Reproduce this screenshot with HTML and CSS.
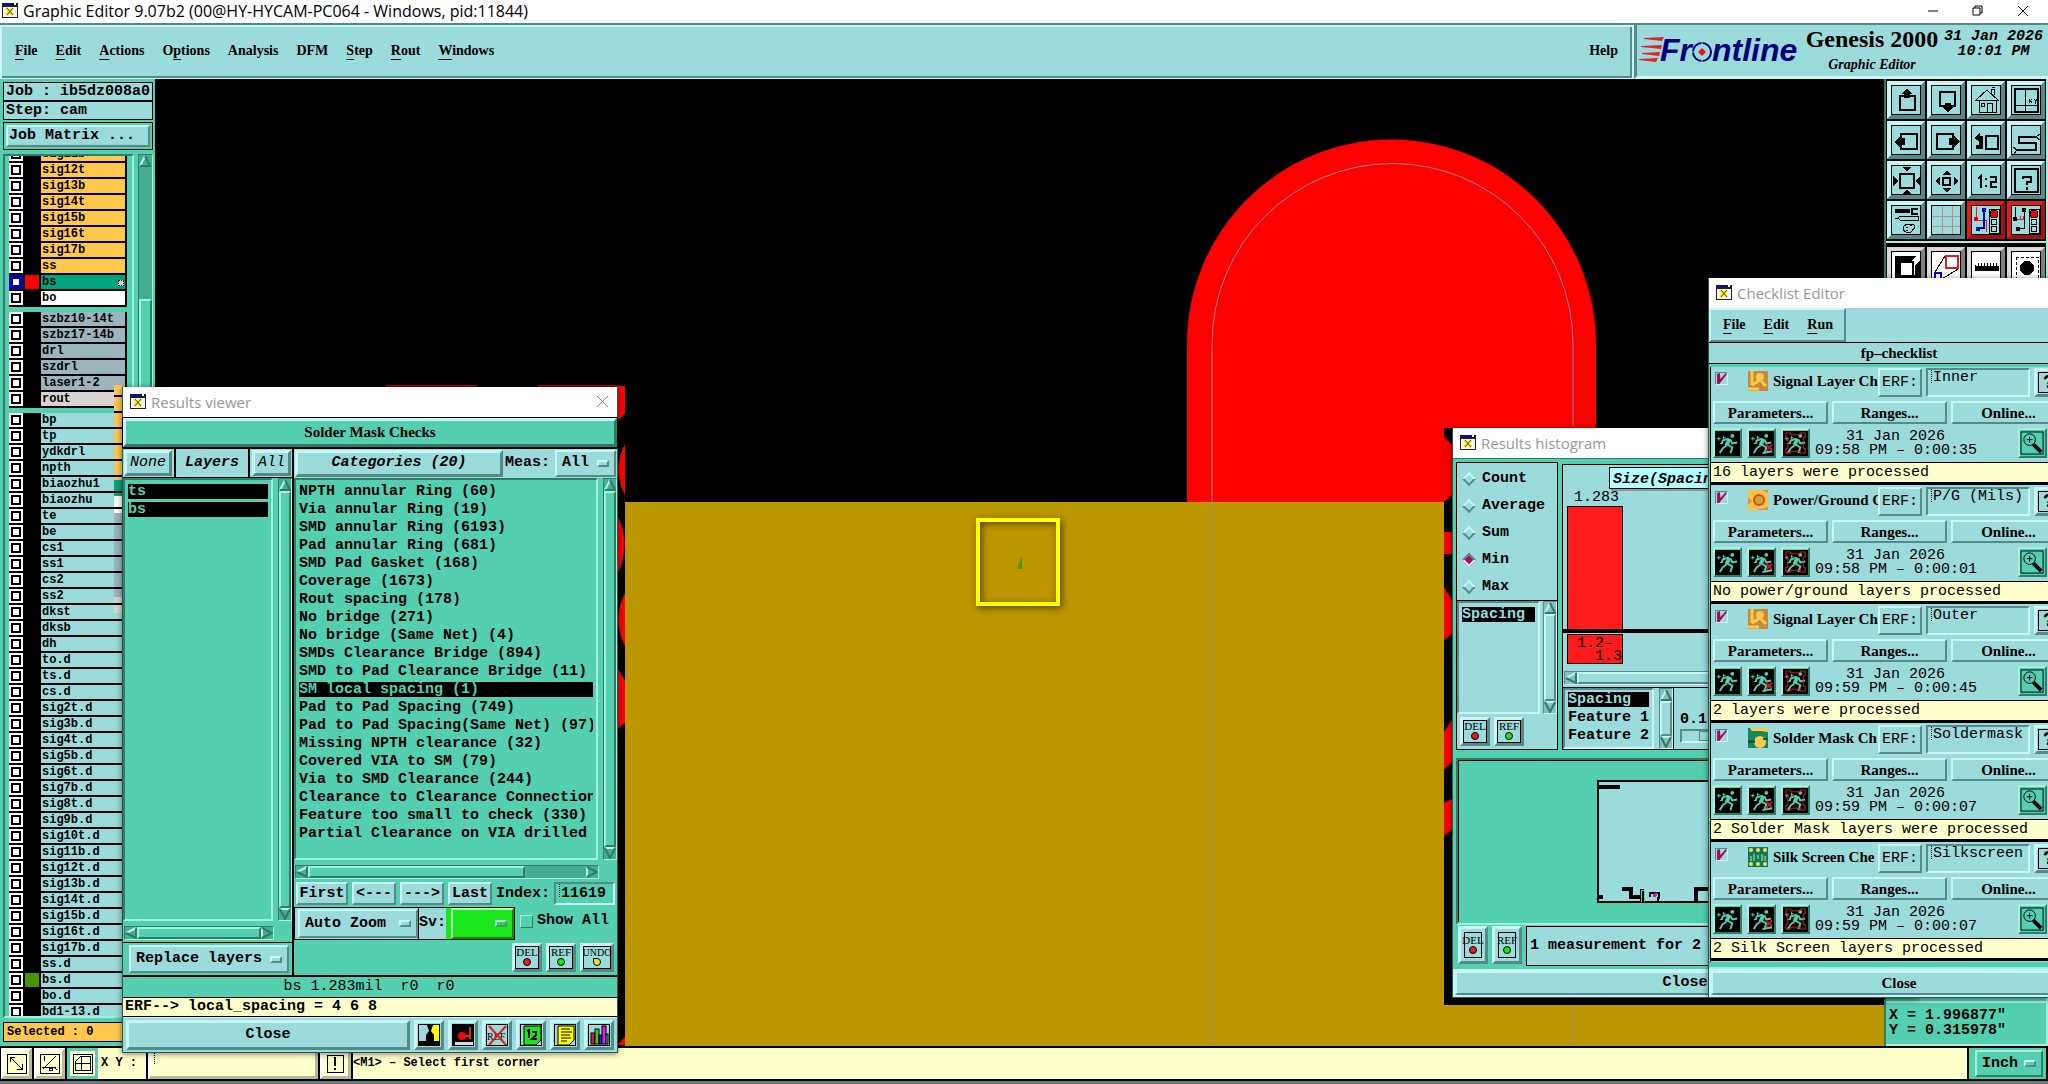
FILE: index.html
```
<!DOCTYPE html>
<html lang="en">
<head>
    <meta charset="UTF-8">
    <meta name="viewport" content="width=device-width, initial-scale=1.0">
    <title>Graphic Editor 9.07b2</title>
    <link rel="stylesheet" href="styles.css">
</head>
<body>
    <!-- shared icons -->
    <svg class="defs" width="0" height="0">
        <symbol id="app" viewBox="0 0 16 15">
            <rect width="16" height="15" fill="#222"/><rect x="1" y="4" width="14" height="10" fill="#f4f4f4"/>
            <rect width="16" height="3" fill="#10107a"/><rect x="12" width="2" height="2" fill="#fff"/>
            <path d="M4 5l7 7M11 5l-7 7" stroke="#ffe81c" stroke-width="3"/><path d="M5 5l6 7M11 5l-6 7" stroke="#55551a"/>
        </symbol>
        <symbol id="up" viewBox="0 0 12 12"><path d="M6 1L1 11" stroke="#b6f5e8" stroke-width="2"/><path d="M1 11h10L6 1" fill="none" stroke="#2c7c68" stroke-width="2"/></symbol>
        <symbol id="down" viewBox="0 0 12 12"><path d="M1 1h10" stroke="#b6f5e8" stroke-width="2"/><path d="M1 1l5 10 5-10" fill="none" stroke="#2c7c68" stroke-width="2"/></symbol>
        <symbol id="left" viewBox="0 0 12 12"><path d="M11 1L1 6" stroke="#b6f5e8" stroke-width="2"/><path d="M1 6l10 5V1" fill="none" stroke="#2c7c68" stroke-width="2"/></symbol>
        <symbol id="right" viewBox="0 0 12 12"><path d="M1 11V1" stroke="#b6f5e8" stroke-width="2"/><path d="M1 1l10 5-10 5" fill="none" stroke="#2c7c68" stroke-width="2"/></symbol>
        <symbol id="runner" viewBox="0 0 26 26">
            <rect width="26" height="26" fill="#000"/>
            <circle cx="18" cy="5" r="2" fill="#54cfb0"/>
            <path d="M15 8l-3 7" stroke="#54cfb0" stroke-width="4"/>
            <path d="M14 8l-6 2-1 3M16 9l2 4 5-1M13 14l5 3-2 6M12 15l-4 3-3 5" fill="none" stroke="#54cfb0" stroke-width="2"/>
            <path d="M2 8h4M4 6v4M8 7h3M9 5v4M5 13h3" stroke="#54cfb0"/>
        </symbol>
        <symbol id="runner2" viewBox="0 0 26 26"><use href="#runner"/><path d="M18 14l6 6M24 14l-6 7" stroke="#c0181e" stroke-width="2"/><path d="M14 23l10-2" stroke="#54cfb0" stroke-width="2"/></symbol>
        <symbol id="runner3" viewBox="0 0 26 26"><use href="#runner"/><path d="M3 2h5v2h10V2h5v5h-2v11h2v5h-5v-2H8v2H3v-5h2V7H3z" fill="none" stroke="#e01c1c" stroke-width="1"/></symbol>
        <symbol id="glass" viewBox="0 0 26 26"><rect x="1" y="1" width="23" height="23" fill="none" stroke="#000"/><circle cx="10" cy="9" r="6" fill="none" stroke="#000"/><path d="M7 9h6M10 6v6" stroke="#000"/><path d="M14 14l8 8" stroke="#000" stroke-width="4"/></symbol>
        <symbol id="signal" viewBox="0 0 20 20"><rect width="20" height="20" fill="#c48a3a"/><path d="M4 0v14M4 14l8-5M12 4v5l6 6M0 18h11" stroke="#ffc84c" stroke-width="3" fill="none"/><circle cx="12" cy="6" r="4" fill="#ffc84c"/></symbol>
        <symbol id="power" viewBox="0 0 20 20"><rect width="20" height="20" fill="#ffc14a"/><path d="M0 8l4 3-4 4M14 0l6 3V0M8 20l12-3v3" fill="#c99b3c"/><circle cx="11" cy="10" r="5" fill="#c9a23c" stroke="#e04a14" stroke-width="2"/></symbol>
        <symbol id="solder" viewBox="0 0 20 20"><rect width="20" height="20" fill="#16885a"/><path d="M2 0h18v4l-7-1H4z" fill="#ffc84c"/><circle cx="12" cy="14" r="6" fill="#ffc84c"/><path d="M0 12h7v3H0M15 10h5v2h-5" fill="#0c5c48"/></symbol>
        <symbol id="silk" viewBox="0 0 20 20"><rect width="20" height="20" fill="#0e7a54"/><g fill="#ffd860"><circle cx="3" cy="3" r="2"/><circle cx="10" cy="3" r="2"/><circle cx="17" cy="3" r="2"/><circle cx="3" cy="17" r="2"/><circle cx="10" cy="17" r="2"/><circle cx="17" cy="17" r="2"/></g><path d="M10 8v4M3 9v5M17 9v5M6 7v7M14 7v7" stroke="#c8f0b0"/></symbol>
    </svg>

    <header class="titlebar">
        <svg class="app-icon"><use href="#app"/></svg>
        <h1>Graphic Editor 9.07b2 (00@HY-HYCAM-PC064 - Windows, pid:11844)</h1>
        <div class="win-controls">
            <button aria-label="Minimize"><svg width="12" height="12"><path d="M1 6h10" stroke="#000"/></svg></button>
            <button aria-label="Restore"><svg width="12" height="12" fill="none" stroke="#000"><path d="M1 3h7v7H1zM3 3V1h7v7H8"/></svg></button>
            <button aria-label="Close"><svg width="12" height="12"><path d="M1 1l10 10M11 1L1 11" stroke="#000"/></svg></button>
        </div>
    </header>

    <div class="menubar">
        <nav class="menus main-menus">
            <button><u>F</u>ile</button>
            <button><u>E</u>dit</button>
            <button><u>A</u>ctions</button>
            <button>O<u>p</u>tions</button>
            <button>Analysis</button>
            <button>DFM</button>
            <button><u>S</u>tep</button>
            <button><u>R</u>out</button>
            <button><u>W</u>indows</button>
            <button class="help">Help</button>
        </nav>
        <div class="brand">
            <svg class="logo" width="166" height="48" role="img" aria-label="Frontline">
                <g fill="#e02428"><path d="M5 13l20-1-2 4-18-2zM2 21l21-1-1 4-20-2zM3 28l18-1-1 4-17-2zM0 34l19-1-2 4-17-2z"/></g>
                <g fill="#00007c" font-family="Liberation Sans, sans-serif" font-size="32" font-weight="bold" font-style="italic"><text x="21" y="36">Fr</text><text x="73" y="36">ntline</text></g>
                <circle cx="63" cy="27" r="9" fill="none" stroke="#00007c" stroke-width="2"/>
                <path d="M63 15v6M63 33v6M51 27h6" stroke="#9bdbdb"/><path d="M63 23l4 4-4 4-4-4z" fill="#f01414"/>
            </svg>
            <div class="product">
                <div class="product-name">Genesis 2000</div>
                <div class="product-sub">Graphic Editor</div>
            </div>
            <div class="clock">31 Jan 2026<br>10:01 PM</div>
        </div>
    </div>

    <main class="workspace">
        <aside class="job-panel">
            <div class="job-line">Job : ib5dz008a0</div>
            <div class="job-line">Step: cam</div>
            <div class="matrix"><button class="btn">Job Matrix ...</button></div>
            <div class="layer-area">
                <div class="layer-view"><div id="layers" class="layers"></div></div>
                <div class="vbar layer-bar"><svg><use href="#up"/></svg><i class="trough"></i><i class="thumb"></i></div>
            </div>
            <div class="selected">Selected : 0</div>
        </aside>

        <section class="canvas">
            <svg width="100%" height="100%">
                <path d="M1032 430V265a204 204 0 0 1 409 0V430z" fill="#f00"/>
                <rect x="470" y="423" width="100%" height="544" fill="#bd9700"/>
                <path d="M1057 966V265a180 180 0 0 1 361 0V966" fill="none" stroke="#8c8c98"/>
                <path d="M231 307h91M383 307h80" stroke="#a00000" stroke-width="2"/>
                <g fill="#f00">
                    <path d="M462 307h8v27l-8 9zM470 365v51c-9-16-9-35 0-51zM462 436c10 18 10 40 0 60zM470 514v53c-9-18-9-35 0-53zM462 588l8 14v42l-8 6zM470 958v8h-8z"/>
                </g>
                <rect x="1289" y="348" width="440" height="578" fill="#000"/>
                <path d="M1289 348v10l8 8v50l-8 7zM1289 453h8v22h-8zM1289 508l8 13v34l-8 6zM1297 641v42l-8 8v-38zM1289 724l8-4v30l-8 7z" fill="#f00"/>
                <path d="M1289 348h152" stroke="#f00" stroke-width="2"/>
                <path d="M867 477v13h-5l2-6z" fill="#4c9a00"/>
            </svg>
            <div class="marker"></div>
        </section>

        <aside class="tool-panel">
            <div class="tools">
                <button class="tool" aria-label="Pan up"><svg><rect x="8" y="10" width="15" height="14"/><path class="solid" d="M15 2l5 6h-2v4h-6V8h-2z"/></svg></button>
                <button class="tool" aria-label="Pan down"><svg><rect x="8" y="6" width="15" height="14"/><path class="solid" d="M16 27l5-6h-2v-4h-6v4h-2z"/></svg></button>
                <button class="tool" aria-label="Home"><svg class="thin"><path d="M4 14L15 4l11 10zM7 14v12h17V14M15 26v-9h5v9M9 17h3v3H9zM19 7V3h3v6M20 2l3-1"/></svg></button>
                <button class="tool" aria-label="XY view"><svg><rect x="3" y="3" width="23" height="23"/><path class="line" d="M13 3v23M3 19h23M17 13l3 4M20 13l-3 4M22 13l2 2 1-2M24 15l-1 3"/></svg></button>
                <button class="tool" aria-label="Pan left"><svg><rect x="9" y="8" width="16" height="15"/><path class="solid" d="M2 16l6-6v2h5v7H8v2z"/></svg></button>
                <button class="tool" aria-label="Pan right"><svg><rect x="5" y="8" width="16" height="15"/><path class="solid" d="M28 16l-6-6v2h-5v7h5v2z"/></svg></button>
                <button class="tool" aria-label="Previous view"><svg><rect x="14" y="10" width="12" height="13"/><path class="wide" d="M5 12h4v9H4"/><path class="solid" d="M2 12l6-5v9z"/></svg></button>
                <button class="tool" aria-label="Serpentine"><svg><path d="M24 11H7v6h17v7H5"/><path class="line" d="M24 11l4-3M24 11l4 3M5 24l-4-3M5 24l-3 4"/></svg></button>
                <button class="tool" aria-label="Zoom in"><svg><rect x="8" y="8" width="14" height="14"/><path class="solid" d="M10 1h10l-5 4zM10 28h10l-5-4zM1 10v10l5-5zM28 10v10l-4-5z"/></svg></button>
                <button class="tool" aria-label="Zoom out"><svg><rect x="11" y="12" width="7" height="7"/><path class="solid" d="M10 9h10l-5-4zM10 22h10l-5 4zM8 10v10l-4-5zM22 10v10l4-5z"/></svg></button>
                <button class="tool" aria-label="Scale"><svg><path d="M6 13l3-3v12M14 12v2M14 19v2M18 11h6v5h-5v5h6"/></svg></button>
                <button class="tool" aria-label="Help on view"><svg><rect x="3" y="3" width="23" height="23"/><path d="M11 13v-2h8v5h-4v3M15 21v3"/></svg></button>
                <button class="tool" aria-label="Settings"><svg><path class="wide" d="M3 5h15"/><path d="M26 3h-6v5h6"/><path class="line" d="M3 12h3l2-2h18v4H8l-2-2M11 22c0-4 12-6 12-1 0 2-3 2-3 4s-8 3-9-3zM14 21h2M18 19h2M14 24h2"/></svg></button>
                <button class="tool" aria-label="Grid"><svg><path class="grid-line" d="M10 0v30M20 0v30M0 10h30M0 20h30"/></svg></button>
                <button class="tool alert" aria-label="Online checks"><svg><path class="red" d="M4 1v13h10v12"/><path class="blue" d="M12 4v18H7"/><path class="blue-dot" d="M10 2h4v4h-4zM4 21h4v4H4z"/><path class="red-dot" d="M2 11h4v4H2z"/><path class="line" d="M17 3h10v24H17z"/><circle class="line lamp" cx="22" cy="8" r="4"/><circle class="line" cx="22" cy="16" r="3"/><circle class="line" cx="22" cy="23" r="3"/></svg></button>
                <button class="tool alert" aria-label="Spacing checks"><svg><path class="line" d="M3 1v13M12 4v18H7"/><path class="solid" d="M10 2h4v4h-4zM1 11h4v4H1zM4 21h4v4H4z"/><path class="red" d="M5 13h7M8 10v4M11 10v4"/><path class="line" d="M17 3h10v24H17z"/><circle class="line lamp" cx="22" cy="8" r="4"/><circle class="line" cx="22" cy="16" r="3"/><circle class="line" cx="22" cy="23" r="3"/></svg></button>
            </div>
            <div class="tools edit-tools">
                <button class="tool white" aria-label="Symbol"><svg><path class="solid" d="M3 4h25v26H3z"/><path class="paper" d="M7 12l3-3h9l5-5h4v4l-5 5v9l-3 3h-9l-4-4z"/><path d="M8 10h13v14H8z"/></svg></button>
                <button class="tool white" aria-label="Resize"><svg><rect class="red-box" x="14" y="4" width="12" height="12"/><rect class="blue" x="3" y="21" width="6" height="6"/><path class="line" d="M13 4L3 20M26 17L10 27"/></svg></button>
                <button class="tool white" aria-label="Measure"><svg><path class="solid" d="M3 13h1v1h2v-3h1v3h2v-3h1v3h2v-3h1v3h2v-3h1v3h2v-3h1v3h2v-3h1v3h2v-3h1v3h2v5H3z"/></svg></button>
                <button class="tool white" aria-label="Feature"><svg><rect class="line" x="4" y="5" width="22" height="22" stroke-dasharray="3 2"/><circle class="solid" cx="15" cy="16" r="7"/></svg></button>
            </div>
            <output class="coords">X = 1.996877"<br>Y = 0.315978"</output>
        </aside>
    </main>

    <footer class="bottombar">
        <button class="btn cream" aria-label="Snap"><svg class="mini"><path d="M1 1h19v19H1zM4 4l12 12M4 9V4h5M16 11v5h-5"/></svg></button>
        <button class="btn cream" aria-label="Snap mode"><svg class="mini"><path d="M1 1h19v19H1zM4 16L17 3M5 3v5M3 14h14M10 17h3v-2h-3zM15 14l3 3"/></svg></button>
        <button class="btn cream snap-on" aria-label="Snap grid"><svg class="mini"><path d="M1 1h19v19H1zM9 3h9v14H3v-8zM9 3v14M3 10h15"/></svg></button>
        <label class="xy" for="xy">X Y :</label>
        <input id="xy" class="field cream" type="text">
        <button class="btn cream bang" aria-label="Alert"><svg class="mini"><path d="M2 2h16v17H2z"/><path d="M10 4v9M10 15v2" stroke-width="2"/></svg></button>
        <div class="message">&lt;M1&gt; – Select first corner</div>
        <div class="units"><span class="drop teal"><select aria-label="Units"><option>Inch</option></select></span></div>
    </footer>

    <div class="trail"></div>

    <!-- Results viewer -->
    <section class="window viewer">
        <div class="wtitle"><svg class="app-icon"><use href="#app"/></svg><h2>Results viewer</h2><button aria-label="Close window"><svg width="11" height="11"><path d="M0 0l11 11M11 0L0 11" stroke="#888"/></svg></button></div>
        <div class="check-name">Solder Mask Checks</div>
        <div class="viewer-body">
            <div class="layer-col">
                <div class="layer-head"><button class="btn">None</button><b>Layers</b><button class="btn">All</button></div>
                <div class="scroller">
                    <ul class="list layer-list"><li class="on">ts</li><li class="on">bs</li></ul>
                    <div class="vbar"><svg><use href="#up"/></svg><i class="thumb"></i><svg><use href="#down"/></svg></div>
                </div>
                <div class="hbar"><svg><use href="#left"/></svg><i class="thumb"></i><svg><use href="#right"/></svg></div>
                <div class="replace"><span class="drop"><select aria-label="Layer action"><option>Replace layers</option></select></span></div>
            </div>
            <div class="cat-col">
                <div class="cat-head"><button class="btn">Categories (20)</button><label for="meas">Meas:</label><span class="drop"><select id="meas"><option>All</option></select></span></div>
                <div class="scroller">
                    <ul id="categories" class="list"></ul>
                    <div class="vbar"><svg><use href="#up"/></svg><i class="thumb"></i><svg><use href="#down"/></svg></div>
                </div>
                <div class="hbar"><svg><use href="#left"/></svg><i class="thumb"></i><i class="trough"></i><svg><use href="#right"/></svg></div>
                <div class="nav-row">
                    <button class="btn">First</button><button class="btn">&lt;---</button><button class="btn">---&gt;</button><button class="btn">Last</button>
                    <label for="index">Index:</label><input id="index" class="field" type="text" value="11619">
                </div>
                <div class="zoom-row">
                    <div class="zoom-box"><span class="drop"><select aria-label="Zoom mode"><option>Auto Zoom</option></select></span><label for="sv">Sv:</label><span class="drop green"><select id="sv"><option></option></select></span></div>
                    <label class="show-all"><input type="checkbox"> Show All</label>
                </div>
                <div class="small-buttons">
                    <button class="btn tag red">DEL</button><button class="btn tag lime">REF</button><button class="btn tag undo">UNDO</button>
                </div>
            </div>
        </div>
        <div class="status">bs 1.283mil&nbsp; r0&nbsp; r0</div>
        <div class="erf-line">ERF--&gt; local_spacing = 4 6 8</div>
        <div class="viewer-foot">
            <button class="btn">Close</button>
            <button class="btn icon" aria-label="Compare"><svg><rect width="11" height="22" fill="#9bdbdb"/><rect x="11" width="11" height="22" fill="#ff0"/><path d="M8 0h6l-2 6 3 4v6h7v6H0v-6h7v-6l3-4z"/></svg></button>
            <button class="btn icon" aria-label="Snapshot"><svg><rect width="22" height="22"/><rect x="2" y="17" width="18" height="4" fill="#cde"/><circle cx="9" cy="11" r="4" fill="#f00"/><path d="M12 11h5M17 2v12" stroke="#e22" stroke-width="2"/></svg></button>
            <button class="btn icon" aria-label="No reference"><svg><text x="0" y="15" font-size="10" font-weight="normal" font-family="Liberation Serif, serif">REF</text><path d="M2 1l17 19M19 1L2 20" stroke="#e01c1c" stroke-width="2"/></svg></button>
            <button class="btn icon" aria-label="Sheet"><svg><path d="M3 1h17v14l-5 5H3z" fill="#1de41d" stroke="#000"/><path d="M6 6l2-1v8M11 7h4v3l-4 4h5" fill="none" stroke="#000" stroke-width="2"/></svg></button>
            <button class="btn icon" aria-label="Report"><svg><path d="M3 1h16v14l-5 5H3z" fill="#ff0" stroke="#000"/><path d="M6 4h9M6 7h11M6 10h9M6 13h10M6 16h6" stroke="#000"/></svg></button>
            <button class="btn icon" aria-label="Histogram"><svg stroke="#000"><rect x="2" y="8" width="4" height="11" fill="#c22"/><rect x="6" y="4" width="4" height="15" fill="#3c3"/><rect x="10" y="10" width="3" height="9" fill="#22c"/><rect x="13" y="1" width="4" height="18" fill="#d2d"/><rect x="17" y="9" width="2" height="10" fill="#2cc"/></svg></button>
        </div>
    </section>

    <!-- Results histogram -->
    <section class="window histogram">
        <div class="wtitle"><svg class="app-icon"><use href="#app"/></svg><h2>Results histogram</h2></div>
        <div class="histo-top">
            <div class="histo-side">
                <div class="radios">
                    <label><input type="radio" name="stat">Count</label>
                    <label><input type="radio" name="stat">Average</label>
                    <label><input type="radio" name="stat">Sum</label>
                    <label><input type="radio" name="stat" checked>Min</label>
                    <label><input type="radio" name="stat">Max</label>
                </div>
                <div class="scroller aqua">
                    <ul class="list"><li class="on">Spacing</li></ul>
                    <div class="vbar"><svg><use href="#up"/></svg><i class="thumb"></i><svg><use href="#down"/></svg></div>
                </div>
                <div class="small-buttons"><button class="btn tag red">DEL</button><button class="btn tag lime">REF</button></div>
            </div>
            <div class="chart">
                <div class="chart-title">Size(Spacing)</div>
                <div class="bar-value">1.283</div>
                <div class="bar"></div>
                <div class="axis"></div>
                <div class="bar-label">1.2–<br>&nbsp; 1.3</div>
                <div class="hbar"><svg><use href="#left"/></svg><i class="thumb"></i></div>
                <div class="chart-foot">
                    <div class="scroller aqua">
                        <ul class="list"><li class="on">Spacing</li><li>Feature 1</li><li>Feature 2</li></ul>
                        <div class="vbar"><svg><use href="#up"/></svg><i class="thumb"></i><svg><use href="#down"/></svg></div>
                    </div>
                    <div class="range"><label for="step">0.1</label><input id="step" type="range" value="20"></div>
                </div>
            </div>
        </div>
        <div class="overview">
            <svg width="420" height="162" shape-rendering="crispEdges">
                <rect x="139" y="20" width="180" height="121" fill="#9bdbdb" stroke="#000" stroke-width="2"/>
                <path d="M140 26h21" stroke="#000" stroke-width="4"/>
                <path d="M163 128h9v8h9M183 140v-12M237 141v-13h20M139 136h5" fill="none" stroke="#000" stroke-width="4"/>
                <path d="M182 141v-12h3v12" fill="none" stroke="#54cfb0"/><path d="M191 136v-4h9v6M199 136v5" fill="none" stroke="#000" stroke-width="2"/><circle cx="196" cy="134" r="2" fill="#c818c8"/>
            </svg>
        </div>
        <div class="measure-row">
            <button class="btn tag red">DEL</button><button class="btn tag lime">REF</button>
            <div class="measure">1 measurement for 2</div>
        </div>
        <div class="wfoot"><button class="btn mono">Close</button></div>
    </section>

    <!-- Checklist editor -->
    <section class="window checklist">
        <div class="wtitle"><svg class="app-icon"><use href="#app"/></svg><h2>Checklist Editor</h2></div>
        <div class="check-menu"><nav class="menus"><button><u>F</u>ile</button><button><u>E</u>dit</button><button><u>R</u>un</button></nav></div>
        <div class="list-name">fp–checklist</div>
        <div id="checks" class="checks"></div>
        <div class="wfoot"><button class="btn">Close</button></div>
    </section>

    <script>
        const layerGroups = [
            ['signals', ['sig11b', 'sig12t', 'sig13b', 'sig14t', 'sig15b', 'sig16t', 'sig17b', 'ss', 'bs', 'bo']],
            ['drills', ['szbz10-14t', 'szbz17-14b', 'drl', 'szdrl', 'laser1-2', 'rout']],
            ['misc', ['bp', 'tp', 'ydkdrl', 'npth', 'biaozhu1', 'biaozhu', 'te', 'be', 'cs1', 'ss1', 'cs2', 'ss2', 'dkst', 'dksb', 'dh',
                'to.d', 'ts.d', 'cs.d', 'sig2t.d', 'sig3b.d', 'sig4t.d', 'sig5b.d', 'sig6t.d', 'sig7b.d', 'sig8t.d', 'sig9b.d', 'sig10t.d',
                'sig11b.d', 'sig12t.d', 'sig13b.d', 'sig14t.d', 'sig15b.d', 'sig16t.d', 'sig17b.d', 'ss.d', 'bs.d', 'bo.d', 'bd1-13.d']]
        ];
        // Layers that are not drawn in the plain colour of their group
        const special = { 'bs': 'work', 'bo': 'blank', 'rout': 'rout', 'bs.d': 'shown' };

        document.getElementById('layers').innerHTML = layerGroups.map(([type, names]) => `
            <div class="group ${type}">
                ${names.map(name => `<label class="layer ${special[name] || ''}"><input type="checkbox"><i></i><span>${name}</span></label>`).join('')}
            </div>
        `).join('');

        const categories = ['NPTH annular Ring (60)', 'Via annular Ring (19)', 'SMD annular Ring (6193)', 'Pad annular Ring (681)',
            'SMD Pad Gasket (168)', 'Coverage (1673)', 'Rout spacing (178)', 'No bridge (271)', 'No bridge (Same Net) (4)',
            'SMDs Clearance Bridge (894)', 'SMD to Pad Clearance Bridge (11)', 'SM local spacing (1)', 'Pad to Pad Spacing (749)',
            'Pad to Pad Spacing(Same Net) (97)', 'Missing NPTH clearance (32)', 'Covered VIA to SM (79)', 'Via to SMD Clearance (244)',
            'Clearance to Clearance Connection', 'Feature too small to check (330)', 'Partial Clearance on VIA drilled'];
        document.getElementById('categories').innerHTML = categories.map(text =>
            `<li class="${text.startsWith('SM local') ? 'on' : ''}">${text}</li>`).join('');

        const checks = [
            ['signal', 'Signal Layer Ch', 'Inner', '09:58 PM – 0:00:35', '16 layers were processed'],
            ['power', 'Power/Ground C', 'P/G (Mils)', '09:58 PM – 0:00:01', 'No power/ground layers processed'],
            ['signal', 'Signal Layer Ch', 'Outer', '09:59 PM – 0:00:45', '2 layers were processed'],
            ['solder', 'Solder Mask Ch', 'Soldermask', '09:59 PM – 0:00:07', '2 Solder Mask layers were processed'],
            ['silk', 'Silk Screen Che', 'Silkscreen', '09:59 PM – 0:00:07', '2 Silk Screen layers processed']
        ];
        document.getElementById('checks').innerHTML = checks.map(([icon, name, erf, time, result], i) => `
            <article class="check">
                <div class="check-head">
                    <input type="checkbox" id="check${i}" checked>
                    <svg class="check-icon"><use href="#${icon}"/></svg>
                    <label for="check${i}">${name}</label>
                    <button class="btn erf">ERF:</button>
                    <input class="field" type="text" value="${erf}" aria-label="ERF model">
                    <button class="btn ask">?</button>
                </div>
                <div class="check-actions"><button class="btn">Parameters...</button><button class="btn">Ranges...</button><button class="btn">Online...</button></div>
                <div class="check-run">
                    <button class="btn teal" aria-label="Run"><svg><use href="#runner"/></svg></button>
                    <button class="btn teal" aria-label="Run on features"><svg><use href="#runner2"/></svg></button>
                    <button class="btn teal" aria-label="Run in profile"><svg><use href="#runner3"/></svg></button>
                    <time>31 Jan 2026<br>${time}</time>
                    <button class="btn teal" aria-label="View results"><svg><use href="#glass"/></svg></button>
                </div>
                <div class="check-result">${result}</div>
            </article>
        `).join('');
    </script>
</body>
</html>
```
FILE: styles.css
```
:root {
    --aqua: #9bdbdb;
    --teal: #54cfb0;
    --cream: #ffffcc;
    --light: #c8f6f4;
    --dark: #568a8a;
    --teal-light: #a4f0de;
    --teal-dark: #2f7c68;
    --mono: "Liberation Mono", monospace;
    --serif: "Liberation Serif", serif;
    --sans: "Open Sans", sans-serif;
}
*, *::before, *::after {
    box-sizing: border-box;
}
body {
    margin: 0;
    height: 100vh;
    overflow: hidden;
    display: flex;
    flex-direction: column;
    position: relative;
    background: #000;
    color: #000;
    font: bold 15px/18px var(--mono);
}
.defs {
    position: absolute;
}
button, input, select {
    font: inherit;
    color: inherit;
    margin: 0;
    padding: 0;
    border: 0;
    background: none;
    border-radius: 0;
}
svg {
    display: block;
}
ul {
    margin: 0;
    padding: 0;
    list-style: none;
}

/* controls */
.btn {
    background: var(--aqua);
    border: 3px solid;
    border-color: var(--light) var(--dark) var(--dark) var(--light);
    display: flex;
    align-items: center;
    justify-content: center;
    white-space: nowrap;
}
.btn.teal {
    background: var(--teal);
    border-color: var(--teal-light) var(--teal-dark) var(--teal-dark) var(--teal-light);
}
.btn.cream {
    background: var(--cream);
    border-color: #fff #b8b89c #b8b89c #fff;
}
/* the dotted line is the idle text cursor */
.field {
    border: 2px solid;
    border-color: var(--dark) var(--light) var(--light) var(--dark);
    min-width: 0;
    background: repeating-linear-gradient(#000 0 1px, transparent 1px 2px) 3px 0 / 1px 14px no-repeat;
}
.drop {
    display: flex;
    align-items: center;
    background: var(--aqua);
    border: 2px solid;
    border-color: var(--light) var(--dark) var(--dark) var(--light);
    padding: 0 5px;
}
.drop select {
    appearance: none;
    flex: 1;
    min-width: 0;
}
.drop::after {
    content: "";
    width: 12px;
    height: 7px;
    border: 2px solid;
    border-color: var(--light) var(--dark) var(--dark) var(--light);
}
.drop.teal {
    background: var(--teal);
    border-color: var(--teal-light) var(--teal-dark) var(--teal-dark) var(--teal-light);
}
.drop.green {
    background: #1ae81a;
    border-color: #b4ffb4 #108a10 #108a10 #b4ffb4;
}
.tag {
    width: 30px;
    height: 29px;
    flex-direction: column;
    justify-content: flex-start;
    font: 11px/11px var(--serif);
    outline: 1px solid #000;
    outline-offset: -4px;
    padding-top: 1px;
}
.tag::after {
    content: "";
    width: 8px;
    height: 8px;
    border: 1px solid #000;
    border-radius: 50%;
    background: #e81c1c;
}
.tag.lime::after {
    background: #1ae81a;
}
.tag.undo {
    width: 34px;
    font-size: 10px;
}
.tag.undo::after {
    background: #f0e020;
    border-radius: 0 4px 4px 4px;
}
.vbar, .hbar {
    display: flex;
    flex: none;
    background: #45ad93;
    border: 1px solid;
    border-color: var(--teal-dark) var(--teal-light) var(--teal-light) var(--teal-dark);
}
.vbar {
    flex-direction: column;
    width: 14px;
}
.hbar {
    height: 14px;
    margin: 5px 18px 2px 1px;
}
.vbar svg, .hbar svg {
    width: 12px;
    height: 12px;
    flex: none;
}
.thumb {
    flex: 1;
    background: var(--teal);
    border: 2px solid;
    border-color: var(--teal-light) var(--teal-dark) var(--teal-dark) var(--teal-light);
}
.scroller {
    display: flex;
    gap: 5px;
    min-height: 0;
}
.list {
    flex: 1;
    min-width: 0;
    overflow: hidden;
    border: 2px solid;
    border-color: var(--teal-dark) var(--teal-light) var(--teal-light) var(--teal-dark);
    padding: 3px;
}
.list li {
    height: 18px;
    line-height: 18px;
    white-space: nowrap;
    overflow: hidden;
}
.list .on {
    background: #000;
    color: var(--teal);
    line-height: 15px;
    background-clip: content-box;
    padding: 1px 0 2px;
}
.aqua .list {
    background: var(--aqua);
    border-color: var(--dark) var(--light) var(--light) var(--dark);
}
.aqua .thumb, .chart .hbar .thumb {
    background: var(--aqua);
    border-color: var(--light) var(--dark) var(--dark) var(--light);
}
.aqua .vbar, .chart .hbar {
    background: #86bfc0;
    border-color: var(--dark) var(--light) var(--light) var(--dark);
}
.aqua .on {
    color: var(--aqua);
}

/* top */
.titlebar {
    height: 23px;
    flex: none;
    display: flex;
    align-items: center;
    background: #fff;
    padding: 0 19px 2px 2px;
}
.titlebar h1 {
    margin: 0 auto 0 5px;
    font: 16px/20px var(--sans);
}
.app-icon {
    width: 16px;
    height: 15px;
}
.win-controls {
    display: flex;
    gap: 33px;
}
.menubar {
    height: 56px;
    flex: none;
    display: flex;
    background: var(--light);
    border-top: 2px solid var(--dark);
}
.menus {
    display: flex;
    align-items: center;
    gap: 18px;
    background: var(--aqua);
    font: bold 14px/20px var(--serif);
}
.menus u {
    text-underline-offset: 4px;
}
.main-menus {
    flex: 1;
    margin: 2px 2px 1px;
    padding: 0 12px 2px 13px;
    border-right: 2px solid var(--dark);
    border-bottom: 2px solid var(--dark);
}
.help {
    margin-left: auto;
}
.brand {
    width: 414px;
    display: flex;
    align-items: flex-start;
    background: var(--aqua);
    border-left: 3px solid var(--dark);
    border-bottom: 3px solid var(--light);
    padding-left: 2px;
}
.product {
    width: 134px;
    text-align: center;
    white-space: nowrap;
}
.product-name {
    font: bold 24px/28px var(--serif);
}
.product-sub {
    font: italic bold 14px/24px var(--serif);
}
.clock {
    flex: 1;
    padding: 4px 4px 0;
    text-align: center;
    white-space: nowrap;
    font-style: italic;
    line-height: 15px;
}

/* workspace */
.workspace {
    flex: 1;
    min-height: 0;
    display: flex;
}
.job-panel {
    width: 155px;
    flex: none;
    display: flex;
    flex-direction: column;
    background: var(--teal);
    padding: 3px 2px 0 3px;
}
.job-line {
    background: var(--aqua);
    border: 1px solid #000;
    height: 19px;
    line-height: 18px;
    padding-left: 2px;
    white-space: nowrap;
}
.matrix {
    border: 1px solid #000;
    margin-top: 2px;
    padding: 2px;
}
.matrix .btn {
    width: 100%;
    height: 22px;
    border-width: 2px;
    justify-content: flex-start;
    padding-left: 1px;
}
.layer-area {
    flex: 1;
    min-height: 0;
    display: flex;
    justify-content: space-between;
    margin-top: 4px;
}
.layer-view {
    width: 131px;
    overflow: hidden;
    padding: 0 5px 0 4px;
    border: 2px solid;
    border-color: var(--teal-dark) var(--teal-light) var(--teal-light) var(--teal-dark);
}
.layers {
    margin-top: -9px;
}
.group {
    background: #000;
    margin-bottom: 5px;
    padding-right: 2px;
}
.layer {
    display: flex;
    gap: 2px;
    height: 16px;
    padding-bottom: 2px;
    font-size: 12px;
    line-height: 14px;
}
.layer input {
    appearance: none;
    width: 14px;
    height: 14px;
    background: #fff;
    border: 2px solid #fff;
    outline: 2px solid #000;
    outline-offset: -4px;
}
.layer i {
    width: 14px;
}
.layer span {
    flex: 1;
    padding-left: 1px;
    background: #ffc84c;
}
.drills span {
    background: #9cb4bc;
}
.misc span {
    background: var(--aqua);
}
.layer.work input {
    border-color: #0000b4;
    outline-color: #0000b4;
}
.layer.work i {
    background: #f00;
}
.layer.work span {
    background: #00a47c;
}
.layer.work span::after {
    content: "";
    float: right;
    width: 6px;
    height: 6px;
    margin: 5px 1px;
    background: #ccc;
    border: 1px dotted #000;
}
.layer.blank span {
    background: #fff;
}
.layer.rout span {
    background: #d8d4d4;
}
.layer.shown i {
    background: #469600;
}
.layer-bar {
    width: 15px;
}
.layer-bar .trough {
    height: 132px;
}
.selected {
    height: 20px;
    margin: 4px 0;
    background: #ffc84c;
    border: 1px solid #000;
    padding-left: 3px;
    font-size: 12px;
    line-height: 18px;
}
.canvas {
    flex: 1;
    min-width: 0;
    position: relative;
    background: #000;
    overflow: hidden;
}
.marker {
    position: absolute;
    left: 821px;
    top: 439px;
    width: 84px;
    height: 88px;
    border: 4px solid #ff0;
    box-shadow: 2px 2px 7px #5a4600, inset 2px 2px 7px #5a4600;
}
.tool-panel {
    width: 164px;
    flex: none;
    display: flex;
    flex-direction: column;
    background: var(--teal);
    border-left: 2px solid var(--teal-dark);
    border-right: 2px solid var(--teal-light);
}
.tools {
    display: grid;
    grid-template-columns: repeat(4, 38px);
    gap: 2px;
    background: #000;
    padding: 2px 0 2px 1px;
    border-bottom: 2px solid var(--teal-light);
}
.tool {
    height: 38px;
    background: var(--aqua);
    border: 4px solid;
    border-color: var(--light) var(--dark) var(--dark) var(--light);
}
.tool svg {
    width: 30px;
    height: 30px;
    border: 1px solid #000;
    fill: none;
    stroke: #000;
    stroke-width: 2;
    shape-rendering: crispEdges;
}
.tool svg.thin, .tool .line {
    stroke-width: 1;
}
.tool .wide {
    stroke-width: 4;
}
.tool .solid {
    fill: #000;
    stroke: none;
}
.tool .paper {
    fill: #fff;
    stroke: none;
}
.tool .grid-line {
    stroke: #c08c90;
    stroke-width: 1;
}
.tool .red {
    stroke: #e01c1c;
    stroke-width: 1;
}
.tool .red-box {
    stroke: #e01c1c;
}
.tool .blue {
    stroke: #0000cc;
}
.tool .red-dot, .tool .lamp {
    fill: #f00000;
}
.tool .blue-dot {
    fill: #0000cc;
}
.tool .red-dot, .tool .blue-dot {
    stroke: none;
}
.tool.alert {
    border-color: #e01c1c #a01414 #a01414 #e01c1c;
}
.edit-tools {
    padding-top: 4px;
}
.tool.white {
    background: #fff;
    border-color: #d8d8d8 #808080 #808080 #d8d8d8;
}
.coords {
    margin-top: auto;
    height: 45px;
    padding: 5px 3px;
    border-top: 2px solid var(--teal-light);
    border-bottom: 2px solid var(--teal-light);
    line-height: 15px;
}

/* bottom bar */
.bottombar {
    height: 38px;
    flex: none;
    display: flex;
    gap: 2px;
    background: #000;
    padding: 2px 2px 2px 1px;
    border-bottom: 3px solid #64807e;
}
.bottombar .btn {
    width: 31px;
}
.snap-on {
    outline: 3px solid var(--teal);
    outline-offset: -3px;
}
.mini {
    width: 21px;
    height: 21px;
    fill: none;
    stroke: #000;
    shape-rendering: crispEdges;
}
.xy {
    width: 48px;
    background: var(--cream);
    margin-left: -2px;
    padding-left: 3px;
    line-height: 30px;
    font-size: 12px;
    white-space: nowrap;
}
.bottombar .field {
    width: 170px;
    background-color: var(--cream);
    border-width: 3px;
    border-color: #fff #b8b89c #b8b89c #fff;
}
.message {
    flex: 1;
    background: var(--cream);
    font-size: 12px;
    line-height: 31px;
}
.units {
    width: 77px;
    background: var(--teal);
    padding: 2px 3px 2px 6px;
    display: flex;
}
.units .drop {
    flex: 1;
}

/* drag trail of the layer list, left of the viewer */
.trail {
    position: absolute;
    left: 114px;
    top: 385px;
    width: 8px;
    height: 633px;
    background:
        repeating-linear-gradient(transparent 0 10px, #000 10px 12px, transparent 12px 16px),
        linear-gradient(#ffc84c 95px, #00a47c 95px 111px, #fff 111px 128px, #9cb4bc 128px 212px, #d8d4d4 212px 228px, var(--aqua) 228px);
}

/* windows */
.window {
    position: absolute;
    display: flex;
    flex-direction: column;
    background: var(--teal);
    border: 1px solid #2c5450;
    border-top: 0;
    box-shadow: 0 1px 6px rgba(0, 0, 0, 0.5);
}
.wtitle {
    height: 30px;
    flex: none;
    display: flex;
    align-items: center;
    background: #fff;
    padding: 0 9px 1px 7px;
}
.wtitle h2 {
    margin: 0 auto 0 5px;
    font: 15px/20px var(--sans);
    color: #999;
}
.wfoot {
    background: var(--light);
    padding: 2px;
    margin-top: auto;
}
.wfoot .btn {
    width: 100%;
    height: 24px;
    border-width: 2px;
    font-family: var(--serif);
}
.wfoot .mono {
    font-family: var(--mono);
}

/* viewer */
.viewer {
    left: 122px;
    top: 387px;
    width: 496px;
    height: 666px;
}
.check-name {
    height: 29px;
    flex: none;
    margin-top: 1px;
    text-align: center;
    font: bold 15px/22px var(--serif);
    border: 3px solid;
    border-color: var(--light) var(--teal-dark) var(--teal-dark) var(--light);
    outline: 1px solid #000;
}
.viewer-body {
    flex: 1;
    min-height: 0;
    display: grid;
    grid-template-columns: 171px minmax(0, 1fr);
    border-top: 2px solid #000;
    border-bottom: 2px solid #000;
}
.layer-col, .cat-col {
    display: flex;
    flex-direction: column;
    min-height: 0;
}
.layer-col {
    border-right: 2px solid #000;
}
.layer-head, .cat-head {
    display: flex;
    background: var(--aqua);
    height: 29px;
    padding: 1px;
    font-style: italic;
}
.layer-head b {
    flex: 1;
    text-align: center;
    line-height: 27px;
    border: solid #000;
    border-width: 0 2px;
    margin: -1px 2px;
}
.layer-head .btn {
    font-weight: normal;
    padding: 0 3px;
}
.layer-head {
    border-bottom: 1px solid #000;
}
.layer-col .scroller {
    flex: 1;
}
.layer-col .list {
    padding: 3px;
}
.replace {
    border-top: 1px solid #000;
    padding: 2px 3px 2px 6px;
}
.replace .drop {
    height: 28px;
}
.cat-head .btn {
    width: 208px;
}
.cat-head label {
    line-height: 26px;
    font-style: normal;
    margin: 0 auto 0 2px;
}
.cat-head .drop {
    width: 61px;
    font-style: normal;
}
.cat-col .scroller {
    height: 385px;
}
.cat-col .hbar .trough {
    width: 61px;
}
.nav-row {
    display: flex;
    gap: 4px;
    padding: 1px 2px 2px;
    height: 26px;
    align-items: center;
}
.nav-row .btn {
    height: 23px;
    width: 44px;
    border-width: 2px;
}
.nav-row .btn:first-child {
    width: 52px;
}
.nav-row .field {
    flex: 1;
    height: 23px;
    padding-left: 5px;
}
.zoom-row {
    display: flex;
    height: 33px;
}
.zoom-box {
    display: flex;
    width: 221px;
    border: 1px solid #000;
    background: var(--aqua);
}
.zoom-box .drop:first-child {
    width: 120px;
    margin: 1px 0 1px 3px;
}
.zoom-box label {
    width: 33px;
    line-height: 30px;
    border-left: 1px solid #000;
}
.zoom-box .green {
    flex: 1;
    box-shadow: -5px 0 #1ae81a;
}
.show-all {
    display: flex;
    align-items: center;
    gap: 4px;
    padding: 0 0 5px 5px;
    white-space: nowrap;
}
.show-all input {
    appearance: none;
    width: 13px;
    height: 13px;
    border: 1px solid;
    border-color: var(--teal-light) var(--teal-dark) var(--teal-dark) var(--teal-light);
}
.small-buttons {
    display: flex;
    gap: 4px;
    padding: 3px;
}
.viewer .small-buttons {
    justify-content: flex-end;
}
.status, .erf-line {
    height: 20px;
    flex: none;
    white-space: pre;
}
.status {
    text-align: center;
    padding-right: 2px;
    font-weight: normal;
    line-height: 20px;
}
.erf-line {
    background: var(--cream);
    border: solid #000;
    border-width: 1px 0;
    padding-left: 2px;
}
.viewer-foot {
    display: flex;
    gap: 4px;
    background: var(--aqua);
    padding: 2px 3px;
    border-top: 1px solid var(--light);
}
.viewer-foot .btn {
    height: 30px;
    width: 30px;
}
.viewer-foot .btn:first-child {
    flex: 1;
}
.icon svg {
    width: 22px;
    height: 22px;
    border: 1px solid #000;
    flex: none;
}

/* histogram */
.histogram {
    left: 1452px;
    top: 428px;
    width: 466px;
    height: 570px;
}
.histo-top {
    display: flex;
    gap: 4px;
    height: 292px;
    padding: 3px 0 0 3px;
    border-top: 1px solid var(--teal-dark);
}
.histo-side {
    width: 102px;
    display: flex;
    flex-direction: column;
    background: var(--aqua);
    border: 1px solid #000;
}
.radios {
    border-bottom: 1px solid #000;
    padding: 2px 0 0 7px;
}
.radios label {
    display: flex;
    align-items: center;
    gap: 8px;
    height: 27px;
    white-space: nowrap;
}
.radios input {
    appearance: none;
    width: 10px;
    height: 10px;
    border: 2px solid;
    border-color: var(--light) var(--dark) var(--dark) var(--light);
    transform: rotate(45deg);
}
.radios input:checked {
    background: #c00050;
    border-color: var(--dark) var(--light) var(--light) var(--dark);
}
.histo-side .scroller {
    flex: 1;
    gap: 3px;
}
.chart {
    flex: 1;
    min-width: 0;
    display: flex;
    flex-direction: column;
    background: var(--aqua);
    border: 1px solid #000;
    margin-top: 2px;
}
.chart > * {
    flex: none;
}
.chart-title {
    width: 130px;
    margin: 2px 0 0 46px;
    height: 22px;
    line-height: 24px;
    padding-left: 3px;
    background: #b4ffff;
    border: 1px solid #000;
    box-shadow: 2px 2px #7aa0a0;
    font-style: italic;
}
.bar-value {
    padding-left: 11px;
    line-height: 17px;
}
.bar, .bar-label {
    width: 56px;
    margin-left: 4px;
    background: #ff1c1c;
    border: 1px solid #000;
}
.bar {
    height: 123px;
    border-bottom: 0;
}
.axis {
    height: 4px;
    background: #000;
}
.bar-label {
    height: 30px;
    margin-top: 1px;
    line-height: 13px;
    padding: 2px 0 0 9px;
    white-space: nowrap;
}
.bar-value, .bar-label {
    font-weight: normal;
}
.chart .hbar {
    margin: 7px 0 2px 1px;
}
.chart .chart-foot {
    display: flex;
    flex: 1;
    min-height: 0;
    border-top: 1px solid #000;
}
.chart-foot .scroller {
    width: 111px;
    flex: none;
    border-right: 1px solid #000;
}
.chart-foot .list {
    padding: 1px 3px;
}
.range {
    padding: 23px 6px 0;
}
.range input {
    appearance: none;
    width: 120px;
    height: 14px;
    display: block;
    border: 2px solid;
    border-color: var(--dark) var(--light) var(--light) var(--dark);
}
.range input::-webkit-slider-thumb {
    appearance: none;
    width: 30px;
    height: 10px;
    background: linear-gradient(90deg, transparent 14px, var(--dark) 14px 15px, transparent 15px);
    border: 1px solid var(--dark);
}
.overview {
    height: 167px;
    overflow: hidden;
    border: 2px solid;
    border-color: var(--teal-dark) var(--teal-light) var(--teal-light) var(--teal-dark);
    margin: 8px 0 0 3px;
}
.overview svg {
    border-top: 1px solid #000;
    border-left: 1px solid #000;
}
.measure-row {
    display: flex;
    gap: 4px;
    padding: 1px 0 3px 5px;
}
.measure-row .tag {
    height: 38px;
    outline-offset: -7px;
    padding-top: 6px;
}
.measure {
    flex: 1;
    background: var(--aqua);
    border: 1px solid #000;
    line-height: 38px;
    padding-left: 3px;
    white-space: nowrap;
}

/* checklist */
.checklist {
    left: 1708px;
    top: 278px;
    width: 382px;
    height: 720px;
}
.check-menu {
    background: var(--aqua);
    height: 35px;
    border-bottom: 1px solid #000;
}
.check-menu .menus {
    width: 137px;
    height: 34px;
    padding-left: 12px;
    border: 2px solid;
    border-color: var(--light) var(--dark) var(--dark) var(--light);
}
.list-name {
    height: 21px;
    background: var(--aqua);
    border-bottom: 1px solid #000;
    text-align: center;
    font: bold 15px/20px var(--serif);
}
.checks {
    margin: 3px 0 0 1px;
    border-left: 1px solid #000;
}
.check {
    height: 119px;
    background: var(--aqua);
}
.check-head {
    display: flex;
    height: 34px;
    align-items: flex-start;
    padding-top: 1px;
}
.check-head > input[type="checkbox"] {
    appearance: none;
    width: 13px;
    height: 13px;
    margin: 4px 20px 0 4px;
    border: 1px solid;
    border-color: var(--dark) var(--light) var(--light) var(--dark);
    flex: none;
}
.check-head > input:checked::before {
    content: "";
    display: block;
    width: 11px;
    height: 11px;
    background: #b4005a;
    clip-path: polygon(10% 10%, 35% 0, 40% 55%, 90% 0, 100% 10%, 30% 100%, 10% 100%);
}
.check-icon {
    width: 20px;
    height: 20px;
    flex: none;
    margin-top: 3px;
}
.check-head label {
    width: 105px;
    flex: none;
    overflow: hidden;
    white-space: nowrap;
    margin: 3px 0 0 5px;
    font: bold 15px/20px var(--serif);
}
.check-head .erf {
    width: 44px;
    height: 29px;
    flex: none;
    border-width: 2px;
    font-weight: normal;
}
.check-head .field {
    width: 104px;
    flex: none;
    height: 29px;
    margin: 0 4px;
    padding: 0 0 10px 5px;
    font-weight: normal;
}
.ask {
    width: 30px;
    height: 29px;
    font-size: 20px;
    outline: 1px solid #000;
    outline-offset: -5px;
}
.check-actions {
    display: flex;
    gap: 4px;
    padding: 0 2px;
}
.check-actions .btn {
    width: 115px;
    height: 23px;
    border-width: 2px;
    font-family: var(--serif);
}
.check-run {
    display: flex;
    gap: 5px;
    padding: 4px 2px;
}
.check-run .btn {
    width: 29px;
    height: 30px;
    border-width: 2px;
}
.check-run .btn svg {
    width: 25px;
    height: 25px;
}
.check-run time {
    width: 203px;
    margin-right: -5px;
    padding: 2px 42px 0 0;
    text-align: center;
    font-weight: normal;
    line-height: 14px;
    white-space: nowrap;
}
.check-result {
    height: 23px;
    background: var(--cream);
    border: solid #000;
    border-width: 1px 0 3px;
    font-weight: normal;
    padding-left: 2px;
    line-height: 19px;
}
.checklist .wfoot {
    border-top: 2px solid var(--teal-light);
}
```
